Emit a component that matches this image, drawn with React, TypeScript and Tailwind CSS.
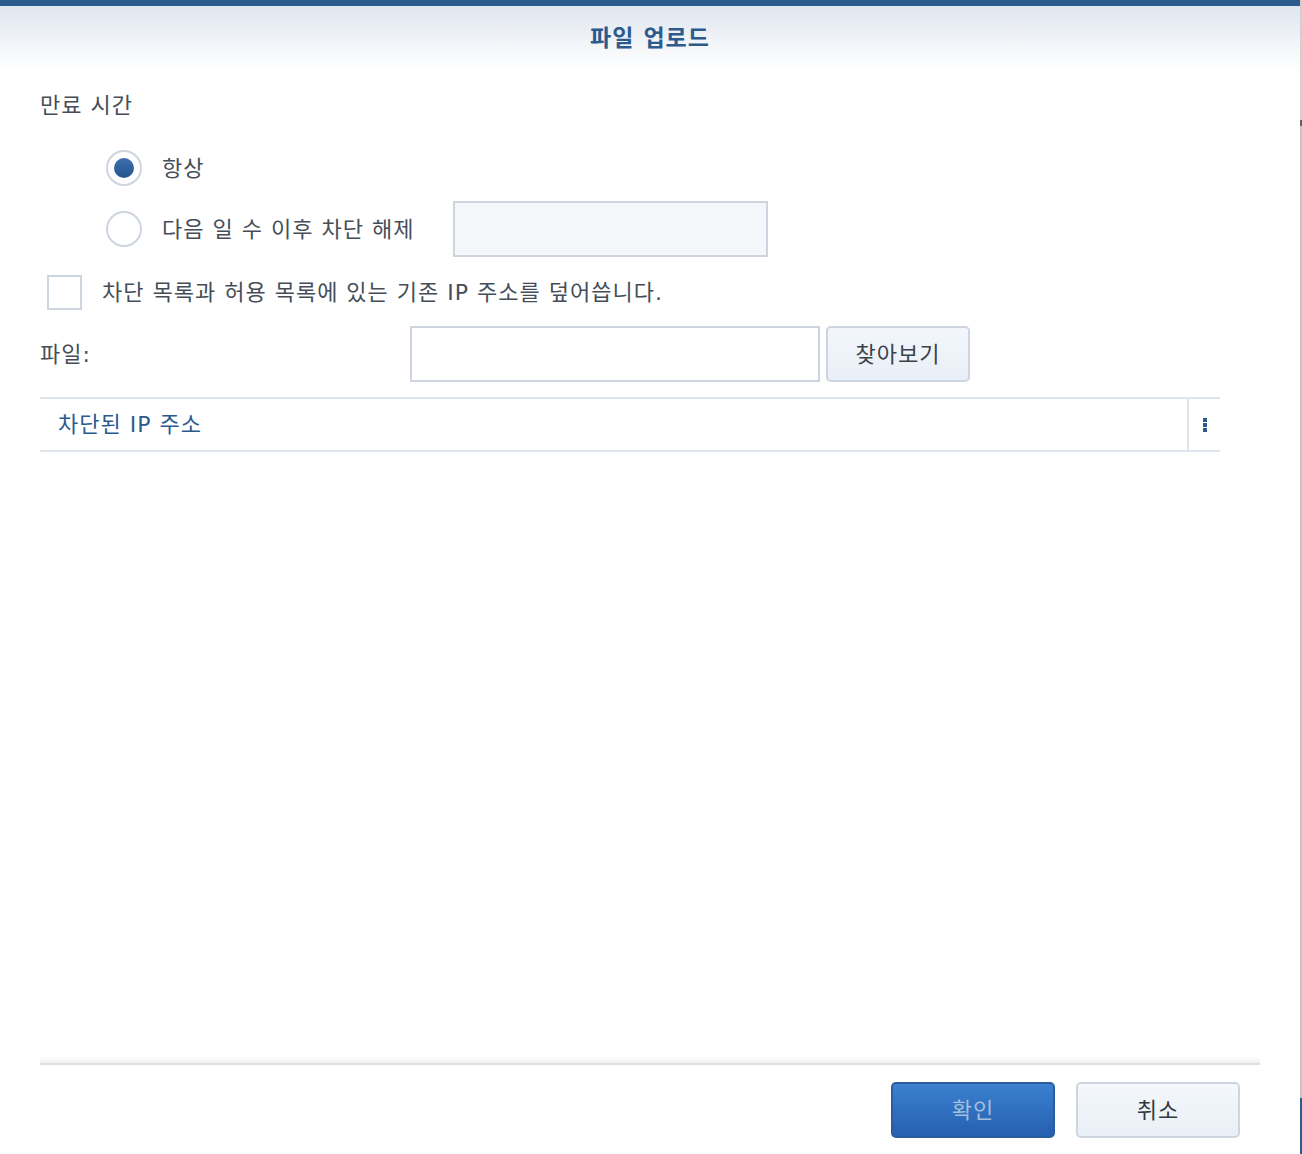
const font = { fontFamily: '"DejaVu Sans", "Noto Sans CJK KR", sans-serif' };

const Radio = ({ checked }: { checked?: boolean }) => (
  <span className="flex items-center justify-center w-[36px] h-[36px] rounded-full border-2 border-[#cdd6e0] bg-white">
    {checked && <span className="w-[20px] h-[20px] rounded-full bg-gradient-to-b from-[#3b6fae] to-[#26558f]" />}
  </span>
);

const App = () => {
  return (
    <div className="flex w-[1302px] h-[1154px] bg-white text-[#454e58] text-[22px] tracking-[1px]" style={font}>
      {/* dialog */}
      <div className="flex flex-col w-[1300px] h-full">
        <div className="h-[6px] bg-[#2b5a8d]" />
        <div className="flex items-center justify-center h-[64px] bg-gradient-to-b from-[#dfe6ef] to-white">
          <h1 className="text-[23px] font-bold text-[#2b5a8d] tracking-[1px]">파일 업로드</h1>
        </div>

        <div className="flex flex-col flex-1 pl-[40px] pr-[80px]">
          <p className="mt-[21px] leading-[30px]">만료 시간</p>

          <div className="flex flex-col pl-[66px] mt-[20px] gap-[6px]">
            <label className="flex items-center gap-[20px] h-[54px]">
              <Radio checked />
              <span>항상</span>
            </label>
            <label className="flex items-center h-[56px]">
              <Radio />
              <span className="ml-[20px] w-[291px]">다음 일 수 이후 차단 해제</span>
              <span className="w-[315px] h-[56px] bg-[#f5f7fa] border-2 border-[#cdd6e0]" />
            </label>
          </div>

          <label className="flex items-center gap-[20px] h-[36px] mt-[17px] pl-[7px]">
            <span className="w-[35px] h-[35px] border-2 border-[#cdd6e0] bg-white" />
            <span>차단 목록과 허용 목록에 있는 기존 IP 주소를 덮어씁니다.</span>
          </label>

          <div className="flex items-center h-[56px] mt-[16px]">
            <span className="w-[370px]">파일:</span>
            <span className="w-[410px] h-[56px] border-2 border-[#cdd6e0] bg-white" />
            <button className="ml-[6px] w-[144px] h-[56px] rounded-[5px] border-2 border-[#cdd6e0] bg-gradient-to-b from-[#f3f7fc] to-[#e9eff6] text-[#3a424b] tracking-[1px]">
              찾아보기
            </button>
          </div>

          <div className="flex items-stretch mt-[15px] h-[55px] border-y-2 border-[#dde5ee]">
            <div className="flex flex-1 items-center pl-[18px] text-[#2b5a8d]">차단된 IP 주소</div>
            <div className="flex flex-col items-center justify-center gap-[1px] w-[33px] border-l-2 border-[#dde5ee]">
              <span className="w-[4px] h-[4px] bg-[#2b5a8d]" />
              <span className="w-[4px] h-[4px] bg-[#2b5a8d]" />
              <span className="w-[4px] h-[4px] bg-[#2b5a8d]" />
            </div>
          </div>

          <div className="flex-1" />

          <div className="mr-[-40px] h-[8px] bg-gradient-to-b from-white to-[#efefef] border-b-2 border-[#e0e0e0]" />
          <div className="flex justify-end gap-[21px] pt-[17px] pb-[16px] mr-[-20px]">
            <button className="w-[164px] h-[56px] rounded-[5px] border-2 border-[#2a5da0] bg-gradient-to-b from-[#3c80d0] to-[#2660b0] text-[#a4bedd] tracking-[1px]">
              확인
            </button>
            <button className="w-[164px] h-[56px] rounded-[5px] border-2 border-[#cdd6e0] bg-gradient-to-b from-[#f4f8fc] to-[#e9eff6] text-[#333a42] tracking-[1px]">
              취소
            </button>
          </div>
        </div>
      </div>

      {/* page behind the dialog */}
      <div className="flex flex-col w-[2px] h-full bg-[#c4c4c4]">
        <div className="h-[120px] bg-[#d0d0d0]" />
        <div className="h-[6px] bg-[#5f6368]" />
        <div className="flex-1" />
        <div className="h-[56px] bg-[#2b5a8d]" />
      </div>
    </div>
  );
};

export default App;
